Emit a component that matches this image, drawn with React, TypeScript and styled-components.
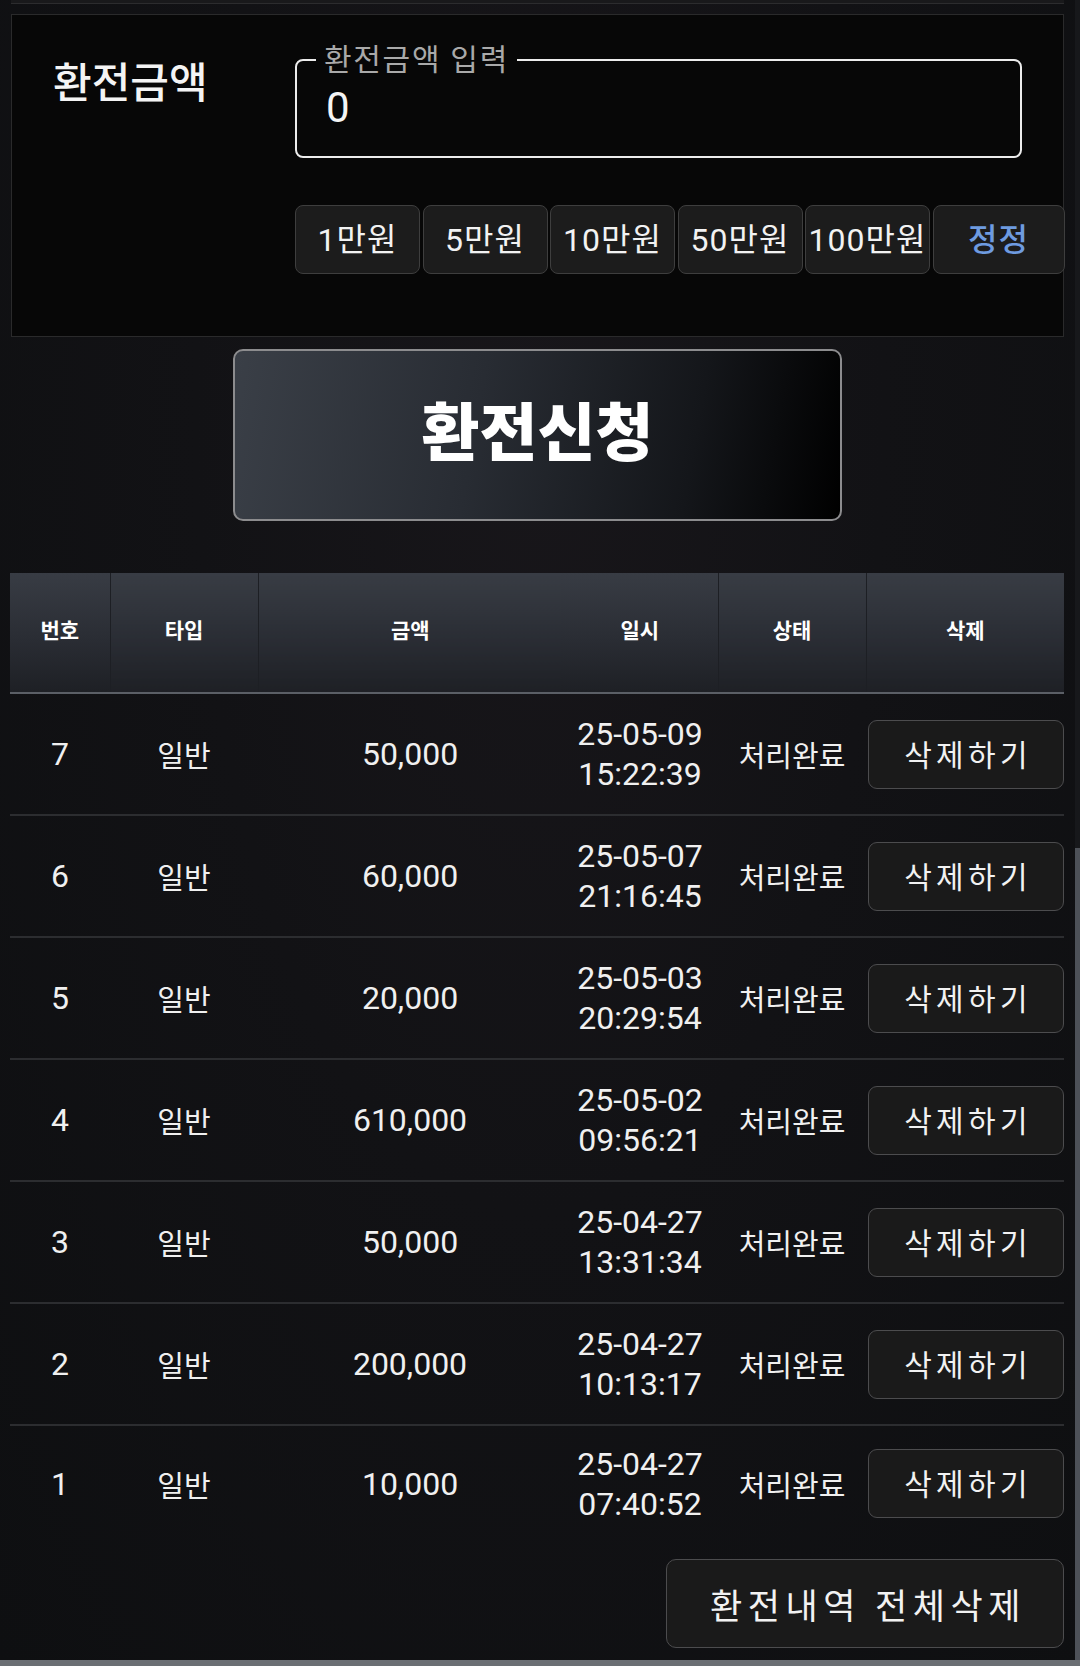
import React from "react";
import styled, { createGlobalStyle } from "styled-components";

const GlobalStyle = createGlobalStyle`
  html, body {
    margin: 0;
    padding: 0;
    background: #111114;
  }
  body {
    font-family: Roboto, "Noto Sans CJK KR", "Noto Sans", sans-serif;
    color: #f2f2f2;
  }
  * {
    box-sizing: border-box;
  }
`;

interface Exchange {
  no: number;
  type: string;
  amount: string;
  date: string;
  time: string;
  status: string;
}

const rows: Exchange[] = [
  { no: 7, type: "일반", amount: "50,000", date: "25-05-09", time: "15:22:39", status: "처리완료" },
  { no: 6, type: "일반", amount: "60,000", date: "25-05-07", time: "21:16:45", status: "처리완료" },
  { no: 5, type: "일반", amount: "20,000", date: "25-05-03", time: "20:29:54", status: "처리완료" },
  { no: 4, type: "일반", amount: "610,000", date: "25-05-02", time: "09:56:21", status: "처리완료" },
  { no: 3, type: "일반", amount: "50,000", date: "25-04-27", time: "13:31:34", status: "처리완료" },
  { no: 2, type: "일반", amount: "200,000", date: "25-04-27", time: "10:13:17", status: "처리완료" },
  { no: 1, type: "일반", amount: "10,000", date: "25-04-27", time: "07:40:52", status: "처리완료" },
];

const quickAmounts = ["1만원", "5만원", "10만원", "50만원", "100만원"];

const Page = styled.div`
  position: relative;
  width: 1080px;
  height: 1666px;
  overflow: hidden;
  padding: 0 16px 0 11px;
  background: radial-gradient(ellipse at 50% 25%, #18161a 0%, #121215 45%, #0e0f11 100%);
`;

const TopEdge = styled.div`
  height: 4px;
  border-bottom: 1px solid #2c2c2e;
  background: #19191b;
  margin-bottom: 10px;
`;

const Panel = styled.section`
  display: grid;
  grid-template-columns: 283px 1fr;
  height: 323px;
  padding-top: 28px;
  background: #070707;
  border: 1px solid #2a2a2b;
`;

const Label = styled.h2`
  margin: 16px 0 0 41px;
  font-size: 42px;
  font-weight: 500;
  line-height: 1.2;
  color: #f4f4f4;
`;

const Fields = styled.div`
  display: flex;
  flex-direction: column;
`;

const AmountBox = styled.fieldset`
  width: 727px;
  margin: 0;
  padding: 0 20px 19px 19px;
  border: 2px solid #ececec;
  border-radius: 8px;
`;

const Legend = styled.legend`
  padding: 0 8px;
  font-size: 30px;
  line-height: 34px;
  letter-spacing: 1.7px;
  color: #a9a9a9;
`;

const AmountInput = styled.input`
  display: block;
  width: 100%;
  height: 60px;
  padding: 0 10px;
  border: none;
  outline: none;
  background: transparent;
  font-family: inherit;
  font-size: 42px;
  color: #f4f4f4;
`;

const QuickRow = styled.div`
  display: flex;
  gap: 2.5px;
  margin-top: 47px;
`;

const QuickButton = styled.button<{ $accent?: boolean; $wide?: boolean }>`
  width: ${(p) => (p.$wide ? "132px" : "125px")};
  height: 69px;
  padding: 0 0 6px;
  border: 1.5px solid #3e3e3e;
  border-radius: 8px;
  background: #1c1c1c;
  font-family: inherit;
  font-size: 32px;
  letter-spacing: 1px;
  white-space: nowrap;
  color: ${(p) => (p.$accent ? "#6e9be0" : "#f2f2f2")};
  font-weight: ${(p) => (p.$accent ? 500 : 400)};
`;

const SubmitButton = styled.button`
  display: block;
  width: 609px;
  height: 172px;
  margin: 12px auto 0;
  padding: 0 0 16px;
  border: 2px solid #8c8c8e;
  border-radius: 10px;
  background: linear-gradient(100deg, #3a3f47 0%, #282c33 40%, #14161a 75%, #000 100%);
  font-family: inherit;
  font-size: 63px;
  font-weight: 900;
  color: #ffffff;
`;

const Table = styled.table`
  width: 1054px;
  margin-top: 52px;
  margin-left: -1px;
  border-collapse: collapse;
  table-layout: fixed;
`;

const HeadCell = styled.th<{ $divider?: boolean }>`
  height: 120px;
  padding: 0 0 8px;
  background: linear-gradient(180deg, #383c44 0%, #2a2d34 55%, #1e2025 100%);
  border-bottom: 2px solid #5b5f66;
  border-right: ${(p) => (p.$divider ? "1px solid #1d1f24" : "none")};
  font-size: 21px;
  font-weight: 700;
  color: #ffffff;
  text-align: center;
`;

const Row = styled.tr<{ $last?: boolean }>`
  height: ${(p) => (p.$last ? "116px" : "122px")};
  border-bottom: ${(p) => (p.$last ? "none" : "2px solid #2c2d30")};
`;

const Cell = styled.td`
  padding: 0;
  font-size: 29px;
  color: #f0f0f0;
  text-align: center;
  vertical-align: middle;
`;

const NumberCell = styled(Cell)`
  font-size: 32px;
`;

const DateCell = styled(Cell)`
  font-size: 32px;
  line-height: 40px;
`;

const ActionCell = styled(Cell)`
  padding: 0 1px 0 2px;
`;

const DeleteButton = styled.button`
  display: block;
  width: 196px;
  height: 69px;
  padding: 0 0 3px 4px;
  border: 1.5px solid #4c4c4e;
  border-radius: 9px;
  background: #1a1a1a;
  font-family: inherit;
  font-size: 30px;
  letter-spacing: 4.3px;
  color: #f2f2f2;
`;

const Footer = styled.div`
  display: flex;
  justify-content: flex-end;
  margin-top: 18px;
`;

const ClearButton = styled.button`
  width: 398px;
  height: 89px;
  padding: 0 0 0 6px;
  border: 1.5px solid #4c4c4e;
  border-radius: 10px;
  background: #1a1a1a;
  font-family: inherit;
  font-size: 35px;
  letter-spacing: 5.5px;
  white-space: nowrap;
  color: #f2f2f2;
`;

const ScrollTrack = styled.div`
  position: absolute;
  top: 0;
  right: 0;
  width: 5px;
  height: 1660px;
  background: #17181b;
`;

const ScrollThumb = styled.div`
  position: absolute;
  top: 848px;
  right: 0;
  width: 5px;
  height: 812px;
  background: #4d5158;
`;

const BottomBar = styled.div`
  position: absolute;
  left: 0;
  bottom: 0;
  width: 100%;
  height: 6px;
  background: #6b6f74;
`;

export default function App() {
  return (
    <>
      <GlobalStyle />
      <Page>
        <TopEdge />
        <Panel>
          <Label>환전금액</Label>
          <Fields>
            <AmountBox>
              <Legend>환전금액 입력</Legend>
              <AmountInput type="text" defaultValue="0" />
            </AmountBox>
            <QuickRow>
              {quickAmounts.map((amount) => (
                <QuickButton key={amount}>{amount}</QuickButton>
              ))}
              <QuickButton $accent $wide>
                정정
              </QuickButton>
            </QuickRow>
          </Fields>
        </Panel>

        <SubmitButton>환전신청</SubmitButton>

        <Table>
          <colgroup>
            <col style={{ width: 100 }} />
            <col style={{ width: 148 }} />
            <col style={{ width: 304 }} />
            <col style={{ width: 156 }} />
            <col style={{ width: 148 }} />
            <col style={{ width: 198 }} />
          </colgroup>
          <thead>
            <tr>
              <HeadCell $divider>번호</HeadCell>
              <HeadCell $divider>타입</HeadCell>
              <HeadCell>금액</HeadCell>
              <HeadCell $divider>일시</HeadCell>
              <HeadCell $divider>상태</HeadCell>
              <HeadCell>삭제</HeadCell>
            </tr>
          </thead>
          <tbody>
            {rows.map((row, i) => (
              <Row key={row.no} $last={i === rows.length - 1}>
                <NumberCell>{row.no}</NumberCell>
                <Cell>{row.type}</Cell>
                <NumberCell>{row.amount}</NumberCell>
                <DateCell>
                  {row.date}
                  <br />
                  {row.time}
                </DateCell>
                <Cell>{row.status}</Cell>
                <ActionCell>
                  <DeleteButton>삭제하기</DeleteButton>
                </ActionCell>
              </Row>
            ))}
          </tbody>
        </Table>

        <Footer>
          <ClearButton>환전내역 전체삭제</ClearButton>
        </Footer>

        <ScrollTrack />
        <ScrollThumb />
        <BottomBar />
      </Page>
    </>
  );
}
